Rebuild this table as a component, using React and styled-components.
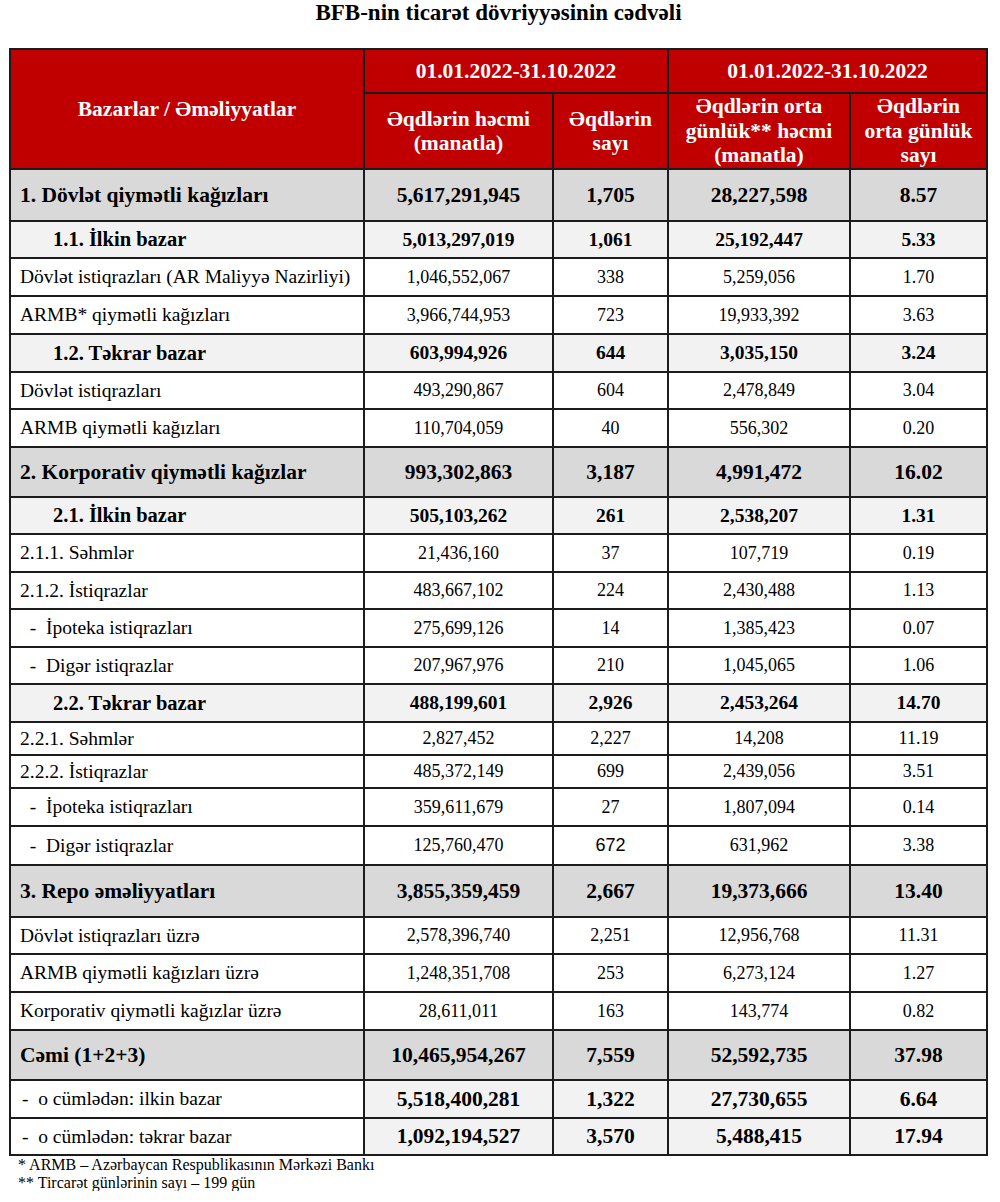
import React from "react";
import styled, { createGlobalStyle } from "styled-components";

const GlobalStyle = createGlobalStyle`
  body {
    margin: 0;
    background: #fff;
    color: #000;
    font-family: "Liberation Serif", "Times New Roman", serif;
  }
`;

const COLORS = {
  red: "#c00000",
  group: "#d9d9d9",
  sub: "#f2f2f2",
  plain: "#ffffff",
  line: "#1c1c1c",
};

const rows = [
  { kind: "group", h: 52, label: "1. Dövlət qiymətli kağızları", v: ["5,617,291,945", "1,705", "28,227,598", "8.57"] },
  { kind: "sub", h: 37, label: "1.1. İlkin bazar", v: ["5,013,297,019", "1,061", "25,192,447", "5.33"] },
  { kind: "plain", h: 38, label: "Dövlət istiqrazları (AR Maliyyə Nazirliyi)", v: ["1,046,552,067", "338", "5,259,056", "1.70"] },
  { kind: "plain", h: 38, label: "ARMB* qiymətli kağızları", v: ["3,966,744,953", "723", "19,933,392", "3.63"] },
  { kind: "sub", h: 38, label: "1.2. Təkrar bazar", v: ["603,994,926", "644", "3,035,150", "3.24"] },
  { kind: "plain", h: 37, label: "Dövlət istiqrazları", v: ["493,290,867", "604", "2,478,849", "3.04"] },
  { kind: "plain", h: 38, label: "ARMB qiymətli kağızları", v: ["110,704,059", "40", "556,302", "0.20"] },
  { kind: "group", h: 50, label: "2. Korporativ qiymətli kağızlar", v: ["993,302,863", "3,187", "4,991,472", "16.02"] },
  { kind: "sub", h: 37, label: "2.1. İlkin bazar", v: ["505,103,262", "261", "2,538,207", "1.31"] },
  { kind: "plain", h: 38, label: "2.1.1. Səhmlər", v: ["21,436,160", "37", "107,719", "0.19"] },
  { kind: "plain", h: 37, label: "2.1.2. İstiqrazlar", v: ["483,667,102", "224", "2,430,488", "1.13"] },
  { kind: "plain", h: 38, label: "  -  İpoteka istiqrazları", v: ["275,699,126", "14", "1,385,423", "0.07"] },
  { kind: "plain", h: 37, label: "  -  Digər istiqrazlar", v: ["207,967,976", "210", "1,045,065", "1.06"] },
  { kind: "sub", h: 38, label: "2.2. Təkrar bazar", v: ["488,199,601", "2,926", "2,453,264", "14.70"] },
  { kind: "plain", h: 33, label: "2.2.1. Səhmlər", v: ["2,827,452", "2,227", "14,208", "11.19"] },
  { kind: "plain", h: 33, label: "2.2.2. İstiqrazlar", v: ["485,372,149", "699", "2,439,056", "3.51"] },
  { kind: "plain", h: 38, label: "  -  İpoteka istiqrazları", v: ["359,611,679", "27", "1,807,094", "0.14"] },
  { kind: "plain", h: 39, label: "  -  Digər istiqrazlar", v: ["125,760,470", "672", "631,962", "3.38"], sansAt: 1 },
  { kind: "group", h: 52, label: "3. Repo əməliyyatları", v: ["3,855,359,459", "2,667", "19,373,666", "13.40"] },
  { kind: "plain", h: 37, label: "Dövlət istiqrazları üzrə", v: ["2,578,396,740", "2,251", "12,956,768", "11.31"] },
  { kind: "plain", h: 38, label: "ARMB qiymətli kağızları üzrə", v: ["1,248,351,708", "253", "6,273,124", "1.27"] },
  { kind: "plain", h: 38, label: "Korporativ qiymətli kağızlar üzrə", v: ["28,611,011", "163", "143,774", "0.82"] },
  { kind: "group", h: 50, label: "Cəmi (1+2+3)", v: ["10,465,954,267", "7,559", "52,592,735", "37.98"] },
  { kind: "total", h: 38, label: "-  o cümlədən: ilkin bazar", v: ["5,518,400,281", "1,322", "27,730,655", "6.64"] },
  { kind: "total", h: 37, label: "-  o cümlədən: təkrar bazar", v: ["1,092,194,527", "3,570", "5,488,415", "17.94"] },
];

const KINDS = {
  group: { labelBg: COLORS.group, valueBg: COLORS.group, labelBold: true, labelSize: 21.5, valueBold: true, valueSize: 21.5, indent: 9 },
  sub: { labelBg: COLORS.sub, valueBg: COLORS.sub, labelBold: true, labelSize: 20.5, valueBold: true, valueSize: 19.5, indent: 42 },
  plain: { labelBg: COLORS.plain, valueBg: COLORS.plain, labelBold: false, labelSize: 19.5, valueBold: false, valueSize: 18, indent: 9 },
  total: { labelBg: COLORS.plain, valueBg: COLORS.sub, labelBold: false, labelSize: 19.5, valueBold: true, valueSize: 21.5, indent: 11 },
};

export default function App() {
  return (
    <Page>
      <GlobalStyle />
      <Title>BFB-nin ticarət dövriyyəsinin cədvəli</Title>
      <Sheet>
        <HeadCell $rowSpan={2}>Bazarlar / Əməliyyatlar</HeadCell>
        <HeadCell $colSpan={2} $h={42}>01.01.2022-31.10.2022</HeadCell>
        <HeadCell $colSpan={2} $h={42}>01.01.2022-31.10.2022</HeadCell>
        <HeadCell $h={74}>
          Əqdlərin həcmi
          <br />
          (manatla)
        </HeadCell>
        <HeadCell $h={74}>
          Əqdlərin
          <br />
          sayı
        </HeadCell>
        <HeadCell $h={74}>
          Əqdlərin orta
          <br />
          günlük** həcmi
          <br />
          (manatla)
        </HeadCell>
        <HeadCell $h={74}>
          Əqdlərin
          <br />
          orta günlük
          <br />
          sayı
        </HeadCell>

        {rows.map((row, i) => {
          const k = KINDS[row.kind];
          return (
            <Row key={i}>
              <Cell
                $h={row.h - 2}
                $bg={k.labelBg}
                $bold={k.labelBold}
                $size={k.labelSize}
                $indent={k.indent}
                $left
              >
                {row.label}
              </Cell>
              {row.v.map((val, j) => (
                <Cell
                  key={j}
                  $h={row.h - 2}
                  $bg={k.valueBg}
                  $bold={k.valueBold}
                  $size={k.valueSize}
                  $sans={row.sansAt === j}
                >
                  {val}
                </Cell>
              ))}
            </Row>
          );
        })}
      </Sheet>
      <Notes>
        <div>* ARMB – Azərbaycan Respublikasının Mərkəzi Bankı</div>
        <div>** Tircarət günlərinin sayı – 199 gün</div>
      </Notes>
    </Page>
  );
}

const Page = styled.div`
  width: 1000px;
  padding-left: 9px;
  box-sizing: border-box;
`;

const Title = styled.h1`
  width: 979px;
  height: 48px;
  margin: 0;
  font-size: 23px;
  line-height: 25px;
  font-weight: 700;
  text-align: center;
`;

const Sheet = styled.div`
  display: grid;
  grid-template-columns: 352px 187px 113px 180px 135px;
  gap: 2px;
  width: fit-content;
  background: ${COLORS.line};
  border: 2px solid ${COLORS.line};
`;

const HeadCell = styled.div`
  grid-row: ${(p) => (p.$rowSpan ? `span ${p.$rowSpan}` : "auto")};
  grid-column: ${(p) => (p.$colSpan ? `span ${p.$colSpan}` : "auto")};
  height: ${(p) => (p.$h ? `${p.$h}px` : "auto")};
  display: flex;
  align-items: center;
  justify-content: center;
  background: ${COLORS.red};
  color: #fff;
  font-size: 21.5px;
  font-weight: 700;
  line-height: 24.5px;
  text-align: center;
`;

const Row = styled.div`
  display: contents;
`;

const Cell = styled.div`
  height: ${(p) => p.$h}px;
  display: flex;
  align-items: center;
  justify-content: ${(p) => (p.$left ? "flex-start" : "center")};
  padding-left: ${(p) => (p.$left ? p.$indent : 0)}px;
  background: ${(p) => p.$bg};
  font-family: ${(p) =>
    p.$sans ? `"Liberation Sans", Arial, sans-serif` : "inherit"};
  font-size: ${(p) => p.$size}px;
  font-weight: ${(p) => (p.$bold ? 700 : 400)};
  white-space: pre;
`;

const Notes = styled.div`
  padding-left: 9px;
  font-size: 16px;
  line-height: 17.5px;
`;
